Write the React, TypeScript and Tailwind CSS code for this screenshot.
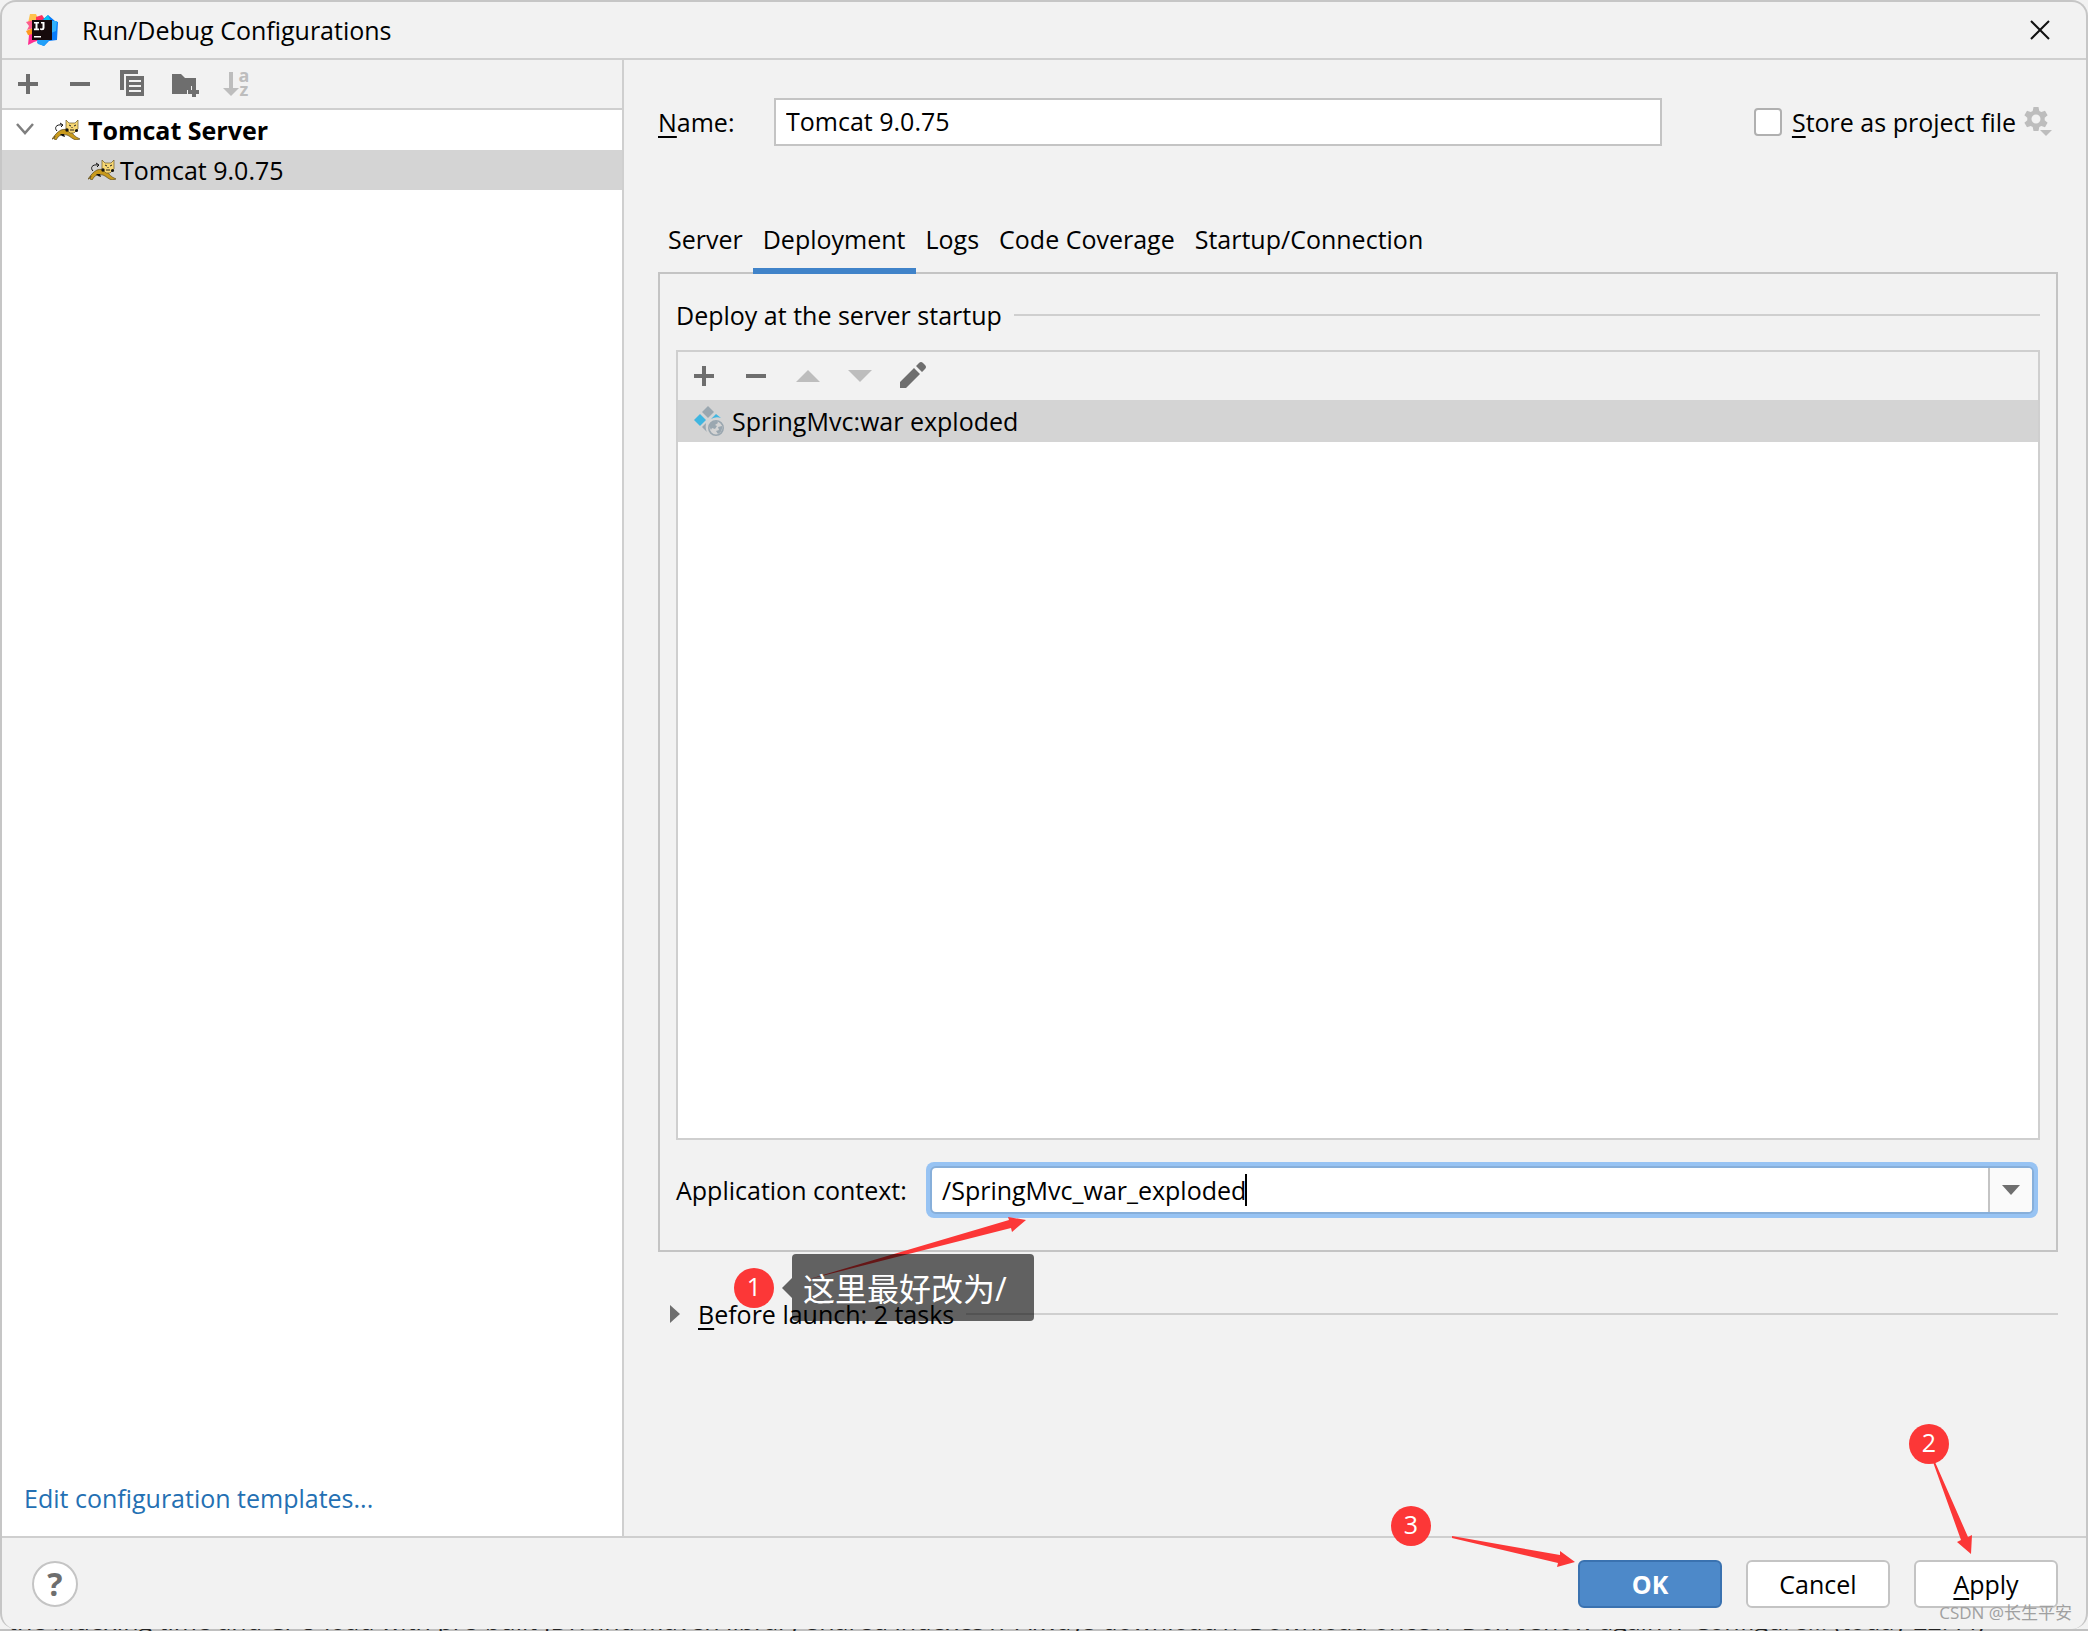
import { ReactNode, useState } from 'react';

const tabs = ['Server', 'Deployment', 'Logs', 'Code Coverage', 'Startup/Connection'];

function IdeaLogo() {
    return (
        <svg viewBox="0 0 32 32" className="w-8 h-8" aria-hidden="true">
            <path d="M4 0h6l3 7-8 3-3-1z" fill="#ffc24d" />
            <path d="M10 3l6-2 4 6-10 4z" fill="#fe315d" />
            <path d="M0 8l8-2v8l-7 2 2-4z" fill="#ff5b8c" />
            <path d="M0 17l7-3v8l-5-1z" fill="#ff9a1f" />
            <path d="M3 21l6-2 5 7-6 2-6 3z" fill="#ff2d90" />
            <path d="M15 7l7-6 7 6 3 1-1 18-8 1-5 5-7-3 2-5z" fill="#087cfa" />
            <path d="M16 7l6-6 3 7z" fill="#07c3f2" />
            <path d="M25 7l6 0-1 10-5 2z" fill="#2fb0fb" />
            <path d="M11 26h12l-5 6-6-2z" fill="#22a0f8" />
            <rect x="6" y="6" width="20" height="20" fill="#160a0c" />
            <path d="M8 8h5v1.600h-1.500v5H13v1.600H8v-1.600h1.500v-5H8zM15 8h3.500v6q0 2.300-2.500 2.300-1.500 0-2.300-1l1.100-1.200q.5.500 1 .500.700 0 .7-.8V9.600H15zM8 22h7v1.600H8z" fill="#fff" />
        </svg>
    );
}

function Tomcat() {
    return (
        <svg viewBox="0 0 28 20" className="w-7 h-5 shrink-0" aria-hidden="true">
            <path d="M0 19c3-4 5-7 9-9 3-1 6-1 9 1 3 3 5 6 10 8l-4 1c-4-1-6-4-9-5-4-1-7 0-9 2l-2 3-2-1 1-3-2 3z" fill="#c99a1c" stroke="#5c4a1c" strokeWidth=".7" />
            <path d="M5 11C2 8 4 4 10 5M8 3l3 2-2 2" fill="none" stroke="#111" strokeWidth="1" />
            <path d="M14 0l3 3h6l3-3v9l-4 4h-4l-4-4z" fill="#f7d774" stroke="#6b5a28" strokeWidth=".7" />
            <path d="M17 5l2 1M24 5l-2 1M18 10h4M20 7v1" stroke="#222" strokeWidth="1" />
            <circle cx="15" cy="10" r="1.700" fill="#111" />
            <circle cx="24.500" cy="10.500" r="1.500" fill="#111" />
            <path d="M8 14l4 0 1 3-3-1z" fill="#111" />
        </svg>
    );
}

function PlusIcon() {
    return (
        <svg viewBox="0 0 20 20" className="w-5 h-5" aria-hidden="true">
            <path d="M8 0h4v8h8v4h-8v8H8v-8H0V8h8z" fill="#6e6e6e" />
        </svg>
    );
}

function MinusIcon() {
    return (
        <svg viewBox="0 0 20 20" className="w-5 h-5" aria-hidden="true">
            <path d="M0 8h20v4H0z" fill="#6e6e6e" />
        </svg>
    );
}

function ArtifactIcon() {
    return (
        <svg viewBox="0 0 30 30" className="w-[30px] h-[30px] shrink-0" aria-hidden="true">
            <path d="M14 0l6 6-6 6-6-6z" fill="#9aa7b0" />
            <path d="M6 8l6 6-6 6-6-6z" fill="#40b6e0" />
            <path d="M22 8l5 4q-5-2-10 1z" fill="#40b6e0" />
            <path d="M12 17q-1 6 1 9l-5-5z" fill="#9aa7b0" />
            <circle cx="22" cy="22" r="7.200" fill="none" stroke="#9aa7b0" strokeWidth="1.600" />
            <path d="M15 20q2-5 8-5l1 2-3 2 2 1-2 3-3-1-1 2zM24 21l4-1q1 5-4 8l-2-3 3-1z" fill="#9aa7b0" />
        </svg>
    );
}

function ToolButton({ label, children }: { label: string; children: ReactNode }) {
    return (
        <button type="button" aria-label={label} className="w-7 h-7 flex items-center justify-center">
            {children}
        </button>
    );
}

function StepBadge({ n }: { n: number }) {
    return (
        <span className="w-10 h-10 rounded-full bg-[#fc3737] text-white text-[25px] leading-9 text-center block">
            {n}
        </span>
    );
}

export default function App() {
    const [name, setName] = useState('Tomcat 9.0.75');
    const [context, setContext] = useState('/SpringMvc_war_exploded');
    const [activeTab, setActiveTab] = useState('Deployment');
    const [store, setStore] = useState(false);

    return (
        <div className="relative h-screen flex flex-col overflow-hidden bg-[#f2f2f2] text-black text-[25px] leading-8 font-['Open_Sans','Noto_Sans_CJK_SC',sans-serif]">
            <div className="flex-1 min-h-0 flex flex-col border-2 border-b-0 border-[#c6c6c6] rounded-2xl bg-[#f2f2f2] overflow-hidden">
                {/* Title bar */}
                <header className="h-[58px] shrink-0 flex items-center border-b-2 border-[#cfcfcf] pl-6 pr-9">
                    <IdeaLogo />
                    <h1 className="ml-6 flex-1">Run/Debug Configurations</h1>
                    <button type="button" aria-label="Close">
                        <svg viewBox="0 0 20 20" className="w-5 h-5" aria-hidden="true">
                            <path d="M1 1l18 18M19 1L1 19" stroke="#111" strokeWidth="2" />
                        </svg>
                    </button>
                </header>

                <div className="flex-1 min-h-0 flex">
                    {/* Configurations tree */}
                    <aside className="w-[622px] shrink-0 flex flex-col bg-white border-r-2 border-[#cfcfcf]">
                        <div className="h-[50px] shrink-0 flex items-center gap-6 pl-3 bg-[#f2f2f2] border-b-2 border-[#cfcfcf]">
                            <ToolButton label="Add"><PlusIcon /></ToolButton>
                            <ToolButton label="Remove"><MinusIcon /></ToolButton>
                            <ToolButton label="Copy">
                                <svg viewBox="0 0 24 28" className="w-6 h-7" aria-hidden="true">
                                    <path d="M0 0h18v4H4v16H0z" fill="#6e6e6e" />
                                    <path d="M6 6h18v20H6zM9 10v2h12v-2zM9 15v2h12v-2zM9 20v2h12v-2z" fill="#6e6e6e" fillRule="evenodd" />
                                </svg>
                            </ToolButton>
                            <ToolButton label="New folder">
                                <svg viewBox="-3 -3 30 26" className="w-[30px] h-[26px] shrink-0" aria-hidden="true">
                                    <path d="M0 0h9l4 4h11v8h-5v4h-4v4H0z" fill="#6e6e6e" />
                                    <path d="M20 12h4v4h4v4h-4v4h-4v-4h-4v-4h4z" fill="#6e6e6e" />
                                </svg>
                            </ToolButton>
                            <ToolButton label="Sort">
                                <span className="flex items-center text-[#bdbdbd]">
                                    <svg viewBox="0 0 16 24" className="w-4 h-6" aria-hidden="true">
                                        <path d="M6 0h4v16h6l-8 8-8-8h6z" fill="#bdbdbd" />
                                    </svg>
                                    <span className="flex flex-col text-lg leading-[14px] font-bold pb-1">
                                        <span>a</span>
                                        <span>z</span>
                                    </span>
                                </span>
                            </ToolButton>
                        </div>
                        <div role="tree">
                            <div role="treeitem" aria-expanded="true" className="h-10 flex items-center pl-3 font-bold">
                                <svg viewBox="0 0 20 14" className="w-5 h-[14px] mr-[18px]" aria-hidden="true">
                                    <path d="M3 1l8 9 8-9" fill="none" stroke="#7f7f7f" strokeWidth="2.500" />
                                </svg>
                                <Tomcat />
                                <span className="ml-2">Tomcat Server</span>
                            </div>
                            <div role="treeitem" aria-selected="true" className="h-10 flex items-center pl-[86px] bg-[#d4d4d4]">
                                <Tomcat />
                                <span className="ml-1">Tomcat 9.0.75</span>
                            </div>
                        </div>
                        <a href="#templates" className="mt-auto pl-[22px] pb-[22px] text-[#2470b3]">
                            Edit configuration templates...
                        </a>
                    </aside>

                    {/* Editor */}
                    <main className="flex-1 min-w-0 flex flex-col pl-[34px] pr-7 pt-[38px]">
                        <div className="flex items-center">
                            <label htmlFor="config-name" className="w-[116px]">
                                <span className="underline underline-offset-4 decoration-2">N</span>ame:
                            </label>
                            <input
                                id="config-name"
                                value={name}
                                onChange={(e) => setName(e.target.value)}
                                className="h-12 flex-1 min-w-0 border-2 border-[#c4c4c4] bg-white px-[10px] pb-[2px] outline-none"
                            />
                            <input
                                id="store"
                                type="checkbox"
                                checked={store}
                                onChange={(e) => setStore(e.target.checked)}
                                className="ml-[92px] w-7 h-7 appearance-none rounded border-2 border-[#b0b0b0] bg-white checked:bg-[#4083c9]"
                            />
                            <label htmlFor="store" className="ml-[10px]">
                                <span className="underline underline-offset-4 decoration-2">S</span>tore as project file
                            </label>
                            <button type="button" aria-label="Storage options" className="ml-2 mr-[6px]">
                                <svg viewBox="0 0 28 30" className="w-7 h-[30px]" aria-hidden="true">
                                    <path
                                        fillRule="evenodd"
                                        fill="#bdbdbd"
                                        d="M9.500 0h5l.8 3.900 2 1.200 3.700-1.300 2.600 4.500-2.900 2.500v2.400l2.900 2.500-2.600 4.500-3.700-1.300-2 1.200-.8 3.900h-5l-.8-3.900-2-1.200-3.700 1.300L.4 15.700l2.900-2.500v-2.400L.4 8.300 3 3.800l3.700 1.300 2-1.200zM12 7.500a4.500 4.500 0 100 9 4.500 4.500 0 000-9z"
                                    />
                                    <path d="M16 23h12l-6 6z" fill="#bdbdbd" />
                                </svg>
                            </button>
                        </div>

                        <div role="tablist" className="mt-16 h-16 shrink-0 flex">
                            {tabs.map((tab) => (
                                <button
                                    key={tab}
                                    type="button"
                                    role="tab"
                                    aria-selected={tab === activeTab}
                                    onClick={() => setActiveTab(tab)}
                                    className={`relative z-10 px-[10px] border-b-6 ${tab === activeTab ? 'border-[#4083c9]' : 'border-transparent'}`}
                                >
                                    {tab}
                                </button>
                            ))}
                        </div>

                        <section className="relative -mt-[2px] h-[980px] flex flex-col border-2 border-[#c4c4c4] px-4 pt-[25px] pb-8">
                            <div className="flex items-center gap-3">
                                <h2>Deploy at the server startup</h2>
                                <div className="flex-1 h-[2px] bg-[#cfcfcf]"></div>
                            </div>
                            <div className="mt-[19px] flex-1 border-2 border-[#cfcfcf] bg-white">
                                <div className="h-12 flex items-center gap-6 pl-3 bg-[#f2f2f2]">
                                    <ToolButton label="Add artifact"><PlusIcon /></ToolButton>
                                    <ToolButton label="Remove artifact"><MinusIcon /></ToolButton>
                                    <ToolButton label="Move up">
                                        <svg viewBox="0 0 24 12" className="w-6 h-3" aria-hidden="true">
                                            <path d="M0 12L12 0l12 12z" fill="#bdbdbd" />
                                        </svg>
                                    </ToolButton>
                                    <ToolButton label="Move down">
                                        <svg viewBox="0 0 24 12" className="w-6 h-3" aria-hidden="true">
                                            <path d="M0 0l12 12L24 0z" fill="#bdbdbd" />
                                        </svg>
                                    </ToolButton>
                                    <ToolButton label="Edit">
                                        <svg viewBox="-1 1 26 26" className="w-[26px] h-[26px] overflow-visible" aria-hidden="true">
                                            <path d="M0 20L14 6l6 6L6 26H0zM16 4l3-3q2-2 4 0l2 2q2 2 0 4l-3 3z" fill="#6e6e6e" />
                                        </svg>
                                    </ToolButton>
                                </div>
                                <div className="h-[42px] flex items-center gap-2 pl-4 bg-[#d4d4d4]">
                                    <ArtifactIcon />
                                    <span>SpringMvc:war exploded</span>
                                </div>
                            </div>
                            <div className="mt-[22px] flex items-center pr-[2px]">
                                <label htmlFor="context" className="w-[250px]">Application context:</label>
                                <div className="flex-1 h-14 rounded-lg bg-[#97c3f3] p-1">
                                    <div className="h-full flex rounded-md border-2 border-[#87afda] bg-white overflow-hidden">
                                        <div className="flex-1 grid items-center">
                                            <input
                                                id="context"
                                                value={context}
                                                onChange={(e) => setContext(e.target.value)}
                                                className="col-start-1 row-start-1 w-full px-[10px] outline-none"
                                            />
                                            <span aria-hidden="true" className="col-start-1 row-start-1 ml-[313px] w-[2px] h-8 bg-black"></span>
                                        </div>
                                        <button
                                            type="button"
                                            aria-label="Show contexts"
                                            className="w-11 border-l-2 border-[#c4c4c4] bg-[#fafafa] flex items-center justify-center"
                                        >
                                            <svg viewBox="0 0 18 10" className="w-[18px] h-[10px]" aria-hidden="true">
                                                <path d="M0 0h18L9 10z" fill="#6e6e6e" />
                                            </svg>
                                        </button>
                                    </div>
                                </div>
                            </div>

                            {/* Note 1, points at the context field */}
                            <svg viewBox="0 0 220 64" className="absolute left-[146px] -bottom-[30px] w-[220px] h-16" aria-hidden="true">
                                <path d="M0 64L203 4l-1-3 18 3-14 12-1-4z" fill="#fc3737" />
                            </svg>
                            <div className="absolute left-[74px] -bottom-[71px] flex items-center">
                                <StepBadge n={1} />
                                <svg viewBox="0 0 10 20" className="ml-2 w-[10px] h-5" aria-hidden="true">
                                    <path d="M10 0v20L0 10z" fill="#000" fillOpacity=".6" />
                                </svg>
                                <div className="h-[67px] w-[242px] rounded-sm bg-black/60 text-white text-[32px] leading-[70px] pl-[11px] whitespace-nowrap">
                                    这里最好改为/
                                </div>
                            </div>
                        </section>

                        <button type="button" className="mt-[46px] flex items-center text-left">
                            <svg viewBox="0 0 10 18" className="ml-3 w-[10px] h-[18px]" aria-hidden="true">
                                <path d="M0 0l10 9-10 9z" fill="#6e6e6e" />
                            </svg>
                            <span className="ml-[18px] mr-3">
                                <span className="underline underline-offset-4 decoration-2">B</span>efore launch: 2 tasks
                            </span>
                            <span className="flex-1 h-[2px] bg-[#cfcfcf]"></span>
                        </button>
                    </main>
                </div>

                <footer className="relative h-[93px] shrink-0 flex items-start justify-between border-t-2 border-[#cfcfcf] pl-[30px] pr-7 pt-[22px]">
                    <button
                        type="button"
                        aria-label="Help"
                        className="w-[46px] h-[46px] mt-px rounded-full border-2 border-[#c4c4c4] bg-white text-[#6e6e6e] text-[32px] font-bold leading-10"
                    >
                        ?
                    </button>
                    <div className="relative flex gap-6">
                        <button type="button" className="w-36 h-12 rounded-md border-2 border-[#3a72b0] bg-[#4d89c9] text-white font-bold">
                            OK
                        </button>
                        <button type="button" className="w-36 h-12 rounded-md border-2 border-[#c4c4c4] bg-white">
                            Cancel
                        </button>
                        <button type="button" className="w-36 h-12 rounded-md border-2 border-[#c4c4c4] bg-white">
                            <span className="underline underline-offset-4 decoration-2">A</span>pply
                        </button>

                        {/* Notes 2 and 3, point at Apply and OK */}
                        <div className="absolute right-[109px] -top-[136px]">
                            <StepBadge n={2} />
                        </div>
                        <svg viewBox="0 0 40 92" className="absolute right-[85px] -top-[98px] w-10 h-[92px]" aria-hidden="true">
                            <path d="M0 0l2 0 33 75 4-2-1 19-14-12 4-2z" fill="#fc3737" />
                        </svg>
                        <div className="absolute right-[627px] -top-[54px]">
                            <StepBadge n={3} />
                        </div>
                        <svg viewBox="0 0 124 32" className="absolute right-[482px] -top-6 w-[124px] h-8" aria-hidden="true">
                            <path d="M0 0l108 19v-4l15 11-18 5 1-4L0 2z" fill="#fc3737" />
                        </svg>
                    </div>
                </footer>
            </div>

            {/* Sliver of the IDE notification behind the dialog */}
            <div className="h-[2px] shrink-0 overflow-hidden bg-[#c0c0c0] pl-2 text-[#222]">
                <p className="-mt-[25px] whitespace-nowrap">
                    the indexing time and CPU load with pre-built JDK and Maven library shared indexes // Always download // Download once // Don't show again // Configure... (today 22:44)
                </p>
            </div>

            <div className="absolute right-4 bottom-[6px] text-[17px] leading-6 text-[#a0a0a0]">CSDN @长生平安</div>
        </div>
    );
}
